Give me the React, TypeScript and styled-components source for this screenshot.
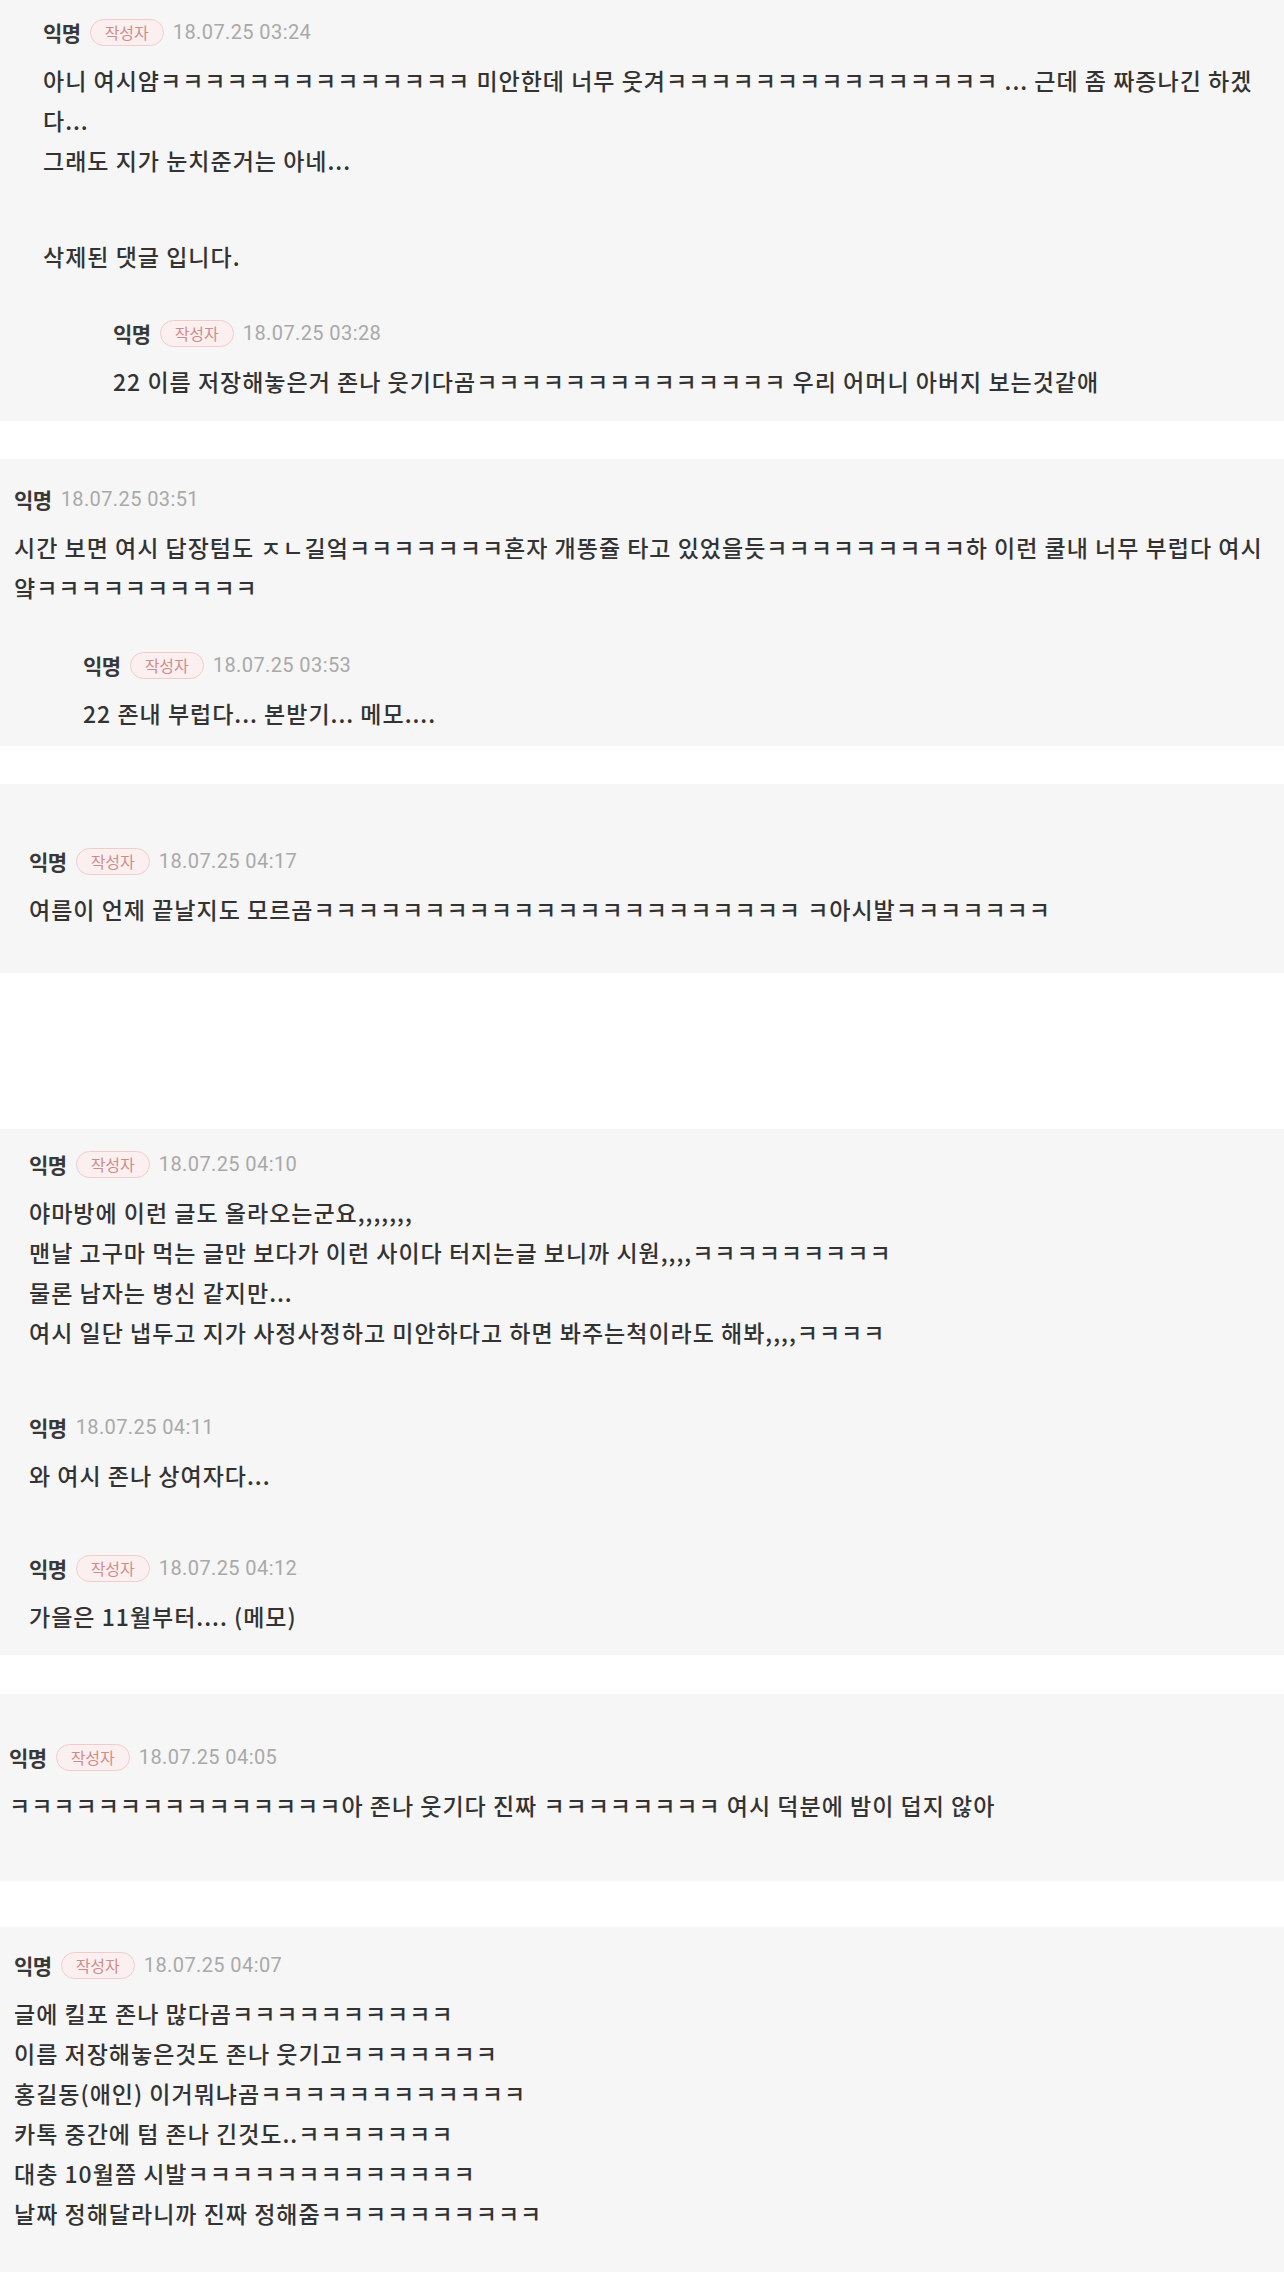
import React from 'react'
import { styled, createGlobalStyle } from 'styled-components'

const GlobalStyle = createGlobalStyle`
  html, body {
    margin: 0;
    padding: 0;
    background: #ffffff;
  }
  body {
    font-family: "Noto Sans CJK KR", "Noto Sans", sans-serif;
    color: #333333;
  }
`

const k = (n: number) => 'ㅋ'.repeat(n)

type Reply = {
  author?: string
  writer?: boolean
  date: string
  lines: string[]
  indent?: number
  mt?: number
  note?: boolean
}

type CardData = {
  pt: number
  pb: number
  pl: number
  pr: number
  mb: number
  items: Reply[]
}

const cards: CardData[] = [
  {
    pt: 18, pb: 20, pl: 43, pr: 0, mb: 38,
    items: [
      {
        writer: true,
        date: '18.07.25 03:24',
        lines: [
          `아니 여시얌${k(14)} 미안한데 너무 웃겨${k(15)} ... 근데 좀 짜증나긴 하겠`,
          '다...',
          '그래도 지가 눈치준거는 아네...',
        ],
      },
      { note: true, date: '', lines: ['삭제된 댓글 입니다.'], mt: 56 },
      {
        writer: true,
        date: '18.07.25 03:28',
        indent: 70,
        mt: 43,
        lines: [`22 이름 저장해놓은거 존나 웃기다곰${k(14)} 우리 어머니 아버지 보는것같애`],
      },
    ],
  },
  {
    pt: 26, pb: 13, pl: 14, pr: 0, mb: 38,
    items: [
      {
        date: '18.07.25 03:51',
        lines: [
          `시간 보면 여시 답장텀도 ㅈㄴ길엌${k(7)}혼자 개똥쥴 타고 있었을듯${k(9)}하 이런 쿨내 너무 부럽다 여시`,
          `얔${k(10)}`,
        ],
      },
      {
        writer: true,
        date: '18.07.25 03:53',
        indent: 69,
        mt: 44,
        lines: ['22 존내 부럽다... 본받기... 메모....'],
      },
    ],
  },
  {
    pt: 63, pb: 44, pl: 29, pr: 0, mb: 156,
    items: [
      {
        writer: true,
        date: '18.07.25 04:17',
        lines: [`여름이 언제 끝날지도 모르곰${k(22)} ㅋ아시발${k(7)}`],
      },
    ],
  },
  {
    pt: 21, pb: 19, pl: 29, pr: 0, mb: 39,
    items: [
      {
        writer: true,
        date: '18.07.25 04:10',
        lines: [
          '야마방에 이런 글도 올라오는군요,,,,,,,',
          `맨날 고구마 먹는 글만 보다가 이런 사이다 터지는글 보니까 시원,,,,${k(9)}`,
          '물론 남자는 병신 같지만...',
          `여시 일단 냅두고 지가 사정사정하고 미안하다고 하면 봐주는척이라도 해봐,,,,${k(4)}`,
        ],
      },
      { date: '18.07.25 04:11', mt: 61, lines: ['와 여시 존나 상여자다...'] },
      { writer: true, date: '18.07.25 04:12', mt: 59, lines: ['가을은 11월부터.... (메모)'] },
    ],
  },
  {
    pt: 49, pb: 56, pl: 9, pr: 0, mb: 46,
    items: [
      {
        writer: true,
        date: '18.07.25 04:05',
        lines: [`${k(15)}아 존나 웃기다 진짜 ${k(8)} 여시 덕분에 밤이 덥지 않아`],
      },
    ],
  },
  {
    pt: 24, pb: 35, pl: 14, pr: 0, mb: 0,
    items: [
      {
        writer: true,
        date: '18.07.25 04:07',
        lines: [
          `글에 킬포 존나 많다곰${k(10)}`,
          `이름 저장해놓은것도 존나 웃기고${k(7)}`,
          `홍길동(애인) 이거뭐냐곰${k(12)}`,
          `카톡 중간에 텀 존나 긴것도..${k(7)}`,
          `대충 10월쯤 시발${k(13)}`,
          `날짜 정해달라니까 진짜 정해줌${k(10)}`,
        ],
      },
    ],
  },
]

const App = () => {
  return (
    <Page>
      <GlobalStyle />
      {cards.map((card, ci) => (
        <Card key={ci} $pt={card.pt} $pb={card.pb} $pl={card.pl} $pr={card.pr} $mb={card.mb}>
          {card.items.map((item, ii) =>
            item.note ? (
              <Note key={ii} $mt={item.mt ?? 0}>{item.lines[0]}</Note>
            ) : (
              <Comment key={ii} $indent={item.indent ?? 0} $mt={item.mt ?? 0}>
                <Header>
                  <Author>{item.author ?? '익명'}</Author>
                  {item.writer && <Badge>작성자</Badge>}
                  <Stamp>{item.date}</Stamp>
                </Header>
                <Body>
                  {item.lines.map((line, li) => (
                    <Line key={li}>{line}</Line>
                  ))}
                </Body>
              </Comment>
            )
          )}
        </Card>
      ))}
    </Page>
  )
}

export default App

const Page = styled.main`
  width: 1284px;
  min-height: 2272px;
  display: flex;
  flex-direction: column;
  background: #ffffff;
`

const Card = styled.section<{ $pt: number; $pb: number; $pl: number; $pr: number; $mb: number }>`
  background: #f6f6f6;
  padding: ${(p) => p.$pt}px ${(p) => p.$pr}px ${(p) => p.$pb}px ${(p) => p.$pl}px;
  margin-bottom: ${(p) => p.$mb}px;
  overflow: hidden;
  &:last-child {
    flex: 1;
  }
`

const Comment = styled.div<{ $indent: number; $mt: number }>`
  margin-left: ${(p) => p.$indent}px;
  margin-top: ${(p) => p.$mt}px;
`

const Header = styled.div`
  display: flex;
  align-items: center;
  height: 28px;
  gap: 9px;
`

const Author = styled.span`
  font-size: 21px;
  font-weight: 600;
  color: #383838;
  letter-spacing: -0.5px;
`

const Badge = styled.span`
  display: inline-flex;
  align-items: center;
  justify-content: center;
  box-sizing: border-box;
  height: 27px;
  padding: 0 14px;
  border: 1.5px solid #f2cccc;
  border-radius: 14px;
  background: #fcefef;
  color: #cf8c8c;
  font-size: 16px;
`

const Stamp = styled.span`
  font-family: Roboto, "Noto Sans", sans-serif;
  font-size: 20px;
  color: #a9a9a9;
  letter-spacing: 0.4px;
`

const Body = styled.div`
  margin-top: 14px;
  font-size: 23px;
  font-weight: 500;
  letter-spacing: 1px;
  line-height: 40px;
  color: #333333;
`

const Line = styled.div`
  white-space: nowrap;
  overflow: hidden;
`

const Note = styled.div<{ $mt: number }>`
  margin-top: ${(p) => p.$mt}px;
  font-size: 23px;
  font-weight: 500;
  letter-spacing: 1px;
  line-height: 40px;
  color: #333333;
`
